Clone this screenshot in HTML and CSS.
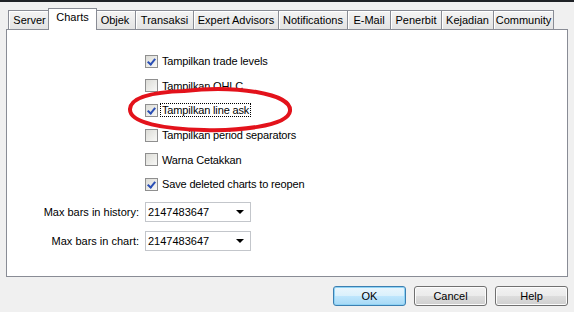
FILE: index.html
```html
<!DOCTYPE html>
<html lang="id">
<head>
    <meta charset="UTF-8">
    <title>Options - Charts</title>
    <link rel="stylesheet" href="styles.css">
</head>
<body>
    <div class="topbar"></div>
    <div class="tabs">
        <div class="tab t-server">Server</div>
        <div class="tab t-charts active">Charts</div>
        <div class="tab t-objek">Objek</div>
        <div class="tab t-transaksi">Transaksi</div>
        <div class="tab t-expert">Expert Advisors</div>
        <div class="tab t-notif">Notifications</div>
        <div class="tab t-email">E-Mail</div>
        <div class="tab t-penerbit">Penerbit</div>
        <div class="tab t-kejadian">Kejadian</div>
        <div class="tab t-community">Community</div>
    </div>
    <div class="panel">
        <div class="checks">
            <div class="check-row"><span class="box checked"></span><span class="label">Tampilkan trade levels</span></div>
            <div class="check-row"><span class="box"></span><span class="label">Tampilkan OHLC</span></div>
            <div class="check-row"><span class="box checked"></span><span class="label focus">Tampilkan line ask</span></div>
            <div class="check-row"><span class="box"></span><span class="label">Tampilkan period separators</span></div>
            <div class="check-row"><span class="box"></span><span class="label">Warna Cetakkan</span></div>
            <div class="check-row"><span class="box checked"></span><span class="label">Save deleted charts to reopen</span></div>
        </div>
        <div class="fields">
            <div class="field-row">
                <label>Max bars in history:</label>
                <div class="combo"><span>2147483647</span><span class="arrow"></span></div>
            </div>
            <div class="field-row">
                <label>Max bars in chart:</label>
                <div class="combo"><span>2147483647</span><span class="arrow"></span></div>
            </div>
        </div>
    </div>
    <div class="buttons">
        <button class="default">OK</button>
        <button>Cancel</button>
        <button>Help</button>
    </div>

    <svg class="marker" width="174" height="50" viewBox="0 0 174 50">
        <path d="M 60 6 C 110 0, 168 8, 166 26 C 164 42, 110 46, 80 45 C 40 44, 5 38, 6 24 C 7 12, 30 7, 60 6 Z"
              fill="none" stroke="#e3121b" stroke-width="4"/>
    </svg>
</body>
</html>
```

FILE: styles.css
```css
body {
    margin: 0;
    width: 574px;
    height: 312px;
    background: #f0f0f0;
    font-family: Tahoma, "Liberation Sans", Arial, sans-serif;
    font-size: 11px;
    color: #000;
    position: relative;
    overflow: hidden;
}
.topbar {
    height: 2px;
    background: #1f2226;
}
.tabs {
    display: flex;
    align-items: flex-end;
    height: 27px;
    margin-left: 8px;
}
.tab {
    flex-shrink: 0;
    box-sizing: border-box;
    white-space: nowrap;
    text-align: center;
    height: 19px;
    line-height: 18px;
    border: 1px solid #898c95;
    border-bottom: none;
    background: linear-gradient(#f4f4f4, #e3e3e3);
    box-shadow: inset 1px 1px 0 #fff;
    margin-left: -1px;
}
.tab:first-child {
    margin-left: 0;
}
.t-server { width: 43px; }
.t-charts { width: 45px; }
.t-objek { width: 42px; }
.t-transaksi { width: 59px; }
.t-expert { width: 86px; }
.t-notif { width: 70px; }
.t-email { width: 44px; }
.t-penerbit { width: 52px; }
.t-kejadian { width: 53px; }
.t-community { width: 61px; }
.tab.active {
    position: relative;
    width: 49px;
    height: 22px;
    line-height: 17px;
    margin: 0 -2px -1px -3px;
    background: #fff;
    box-shadow: none;
    z-index: 1;
}
.panel {
    margin: 0 6px 0 6px;
    height: 246px;
    background: #fff;
    border: 1px solid #898c95;
}
.checks {
    padding: 19px 0 0 138px;
}
.check-row {
    display: flex;
    align-items: center;
    height: 24.6px;
}
.box {
    width: 11px;
    height: 11px;
    border: 1px solid #8f8f8f;
    background: linear-gradient(135deg, #dcdcd7, #f8f8f6);
    margin-right: 2px;
    position: relative;
}
.box.checked::after {
    content: "";
    position: absolute;
    left: 3px;
    top: 1px;
    width: 3px;
    height: 6px;
    border: solid #2a4fb5;
    border-width: 0 2px 2px 0;
    transform: rotate(40deg);
}
.label {
    padding: 0 1px;
    border: 1px solid transparent;
    letter-spacing: -0.15px;
}
.label.focus {
    border: 1px dotted #000;
}
.fields {
    padding-top: 1px;
}
.field-row {
    display: flex;
    align-items: center;
    height: 29px;
}
.field-row label {
    width: 132px;
    text-align: right;
    padding-right: 6px;
}
.combo {
    height: 18px;
    border: 1px solid #c3c6cb;
    background: #fff;
    display: flex;
    align-items: center;
    justify-content: space-between;
    padding: 0 6px 0 2px;
    width: 96px;
}
.arrow {
    width: 0;
    height: 0;
    border-left: 4px solid transparent;
    border-right: 4px solid transparent;
    border-top: 4px solid #000;
}
.buttons {
    display: flex;
    justify-content: flex-end;
    gap: 8px;
    margin: 9px 6px 0 0;
}
button {
    width: 73px;
    height: 20px;
    font: inherit;
    color: #000;
    border: 1px solid #707070;
    border-radius: 3px;
    background: linear-gradient(#f2f2f2 0%, #ebebeb 50%, #dddddd 51%, #cfcfcf 100%);
    box-shadow: inset 0 0 0 1px #fcfcfc;
    padding: 0;
}
button.default {
    border-color: #3c7fb1;
    box-shadow: inset 0 0 0 1px #8fd3f5;
    background: linear-gradient(#eaf6fd 0%, #d9f0fc 50%, #bee6fd 51%, #a7d9f5 100%);
}
.marker {
    position: absolute;
    left: 124px;
    top: 85px;
}
```
